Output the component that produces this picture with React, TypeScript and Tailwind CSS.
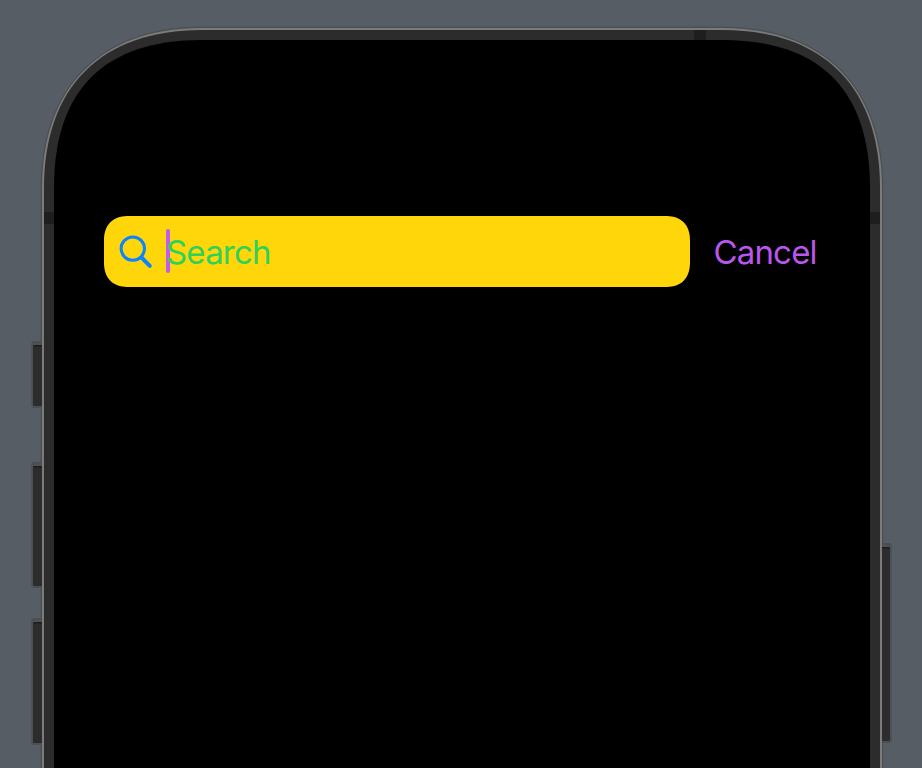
import React from "react";

type BezelProps = { left: number; right: number; top: number; extent: number; pull: number };

// Smooth outline with continuous top corners, open past the bottom edge.
function outline({ left, right, top, extent: e, pull: k }: BezelProps): string {
  const bottom = 800;
  return [
    `M${left} ${bottom}`,
    `L${left} ${top + e}`,
    `C${left} ${top + k} ${left + k} ${top} ${left + e} ${top}`,
    `L${right - e} ${top}`,
    `C${right - k} ${top} ${right} ${top + k} ${right} ${top + e}`,
    `L${right} ${bottom}Z`,
  ].join("");
}

function SideButton({ x, y, height }: { x: number; y: number; height: number }) {
  return (
    <g>
      <rect x={x - 1.7} y={y - 4} width={13.4} height={height + 6} rx={3} fill="#4a4f55" />
      <rect x={x} y={y - 2} width={10} height={height + 2} rx={1} fill="#4f5152" />
      <rect x={x} y={y} width={10} height={height} rx={1.5} fill="#2c2c2c" />
      <rect x={x + 0.5} y={y} width={9} height={1.5} fill="#1c1c1c" />
    </g>
  );
}

function PhoneBody() {
  return (
    <svg className="absolute inset-0" width={922} height={768} viewBox="0 0 922 768" aria-hidden="true">
      <path d={outline({ left: 40.6, right: 883.4, top: 26.4, extent: 162, pull: 60 })} fill="#4b5056" />
      <SideButton x={33} y={345} height={61} />
      <SideButton x={33} y={466} height={120} />
      <SideButton x={33} y={622} height={121} />
      <SideButton x={880} y={547} height={194} />
      <path d={outline({ left: 42, right: 882, top: 28, extent: 160, pull: 59 })} fill="#7b7b79" />
      <path d={outline({ left: 44, right: 880, top: 30, extent: 158, pull: 57 })} fill="#2c2c2c" />
      <rect x={694} y={30} width={12} height={11} fill="#1e1e1e" />
      <rect x={44} y={212} width={11} height={12} fill="#1e1e1e" />
      <rect x={869} y={212} width={11} height={12} fill="#1e1e1e" />
      <path d={outline({ left: 54, right: 870, top: 40, extent: 148, pull: 50 })} fill="#000" />
    </svg>
  );
}

function SearchIcon() {
  return (
    <svg className="mt-[1px]" width={34} height={34} viewBox="0 0 34 34" fill="none" stroke="#0a84ff" aria-hidden="true">
      <circle cx={13.8} cy={13.6} r={11.7} strokeWidth={3} />
      <path d="M22.5 22.5 30.8 30.9" strokeWidth={4} strokeLinecap="round" />
    </svg>
  );
}

export default function App() {
  return (
    <main className="relative h-[768px] w-[922px] overflow-hidden bg-[#565d65] font-['Inter',sans-serif]">
      <PhoneBody />
      <div className="relative flex items-center pl-[104px] pt-[215.5px] text-[33px] leading-[40px]">
        <div className="flex h-[71.5px] w-[586.4px] items-center rounded-[25px] bg-[#ffd60a] pl-[15px] [corner-shape:superellipse(1.25)]">
          <SearchIcon />
          <span className="ml-[13px] h-[44px] w-[4px] rounded-full bg-[#bf5af2]" />
          <span className="-ml-[4px] mt-[1px] tracking-[-0.8px] text-[#30d158]">Search</span>
        </div>
        <button className="ml-[23px] mt-[1px] tracking-[-0.8px] text-[#b857ea]">Cancel</button>
      </div>
    </main>
  );
}
